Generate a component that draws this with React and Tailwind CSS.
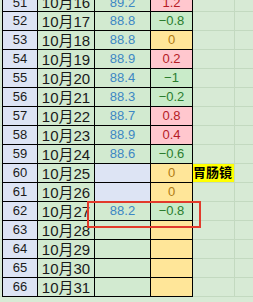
import React from "react";

const rows = [
  { n: 51, d: "10月16", v: "89.2", diff: "1.2", t: "r" },
  { n: 52, d: "10月17", v: "88.8", diff: "−0.8", t: "g" },
  { n: 53, d: "10月18", v: "88.8", diff: "0", t: "y" },
  { n: 54, d: "10月19", v: "88.9", diff: "0.2", t: "r" },
  { n: 55, d: "10月20", v: "88.4", diff: "−1", t: "g" },
  { n: 56, d: "10月21", v: "88.3", diff: "−0.2", t: "g" },
  { n: 57, d: "10月22", v: "88.7", diff: "0.8", t: "r" },
  { n: 58, d: "10月23", v: "88.9", diff: "0.4", t: "r" },
  { n: 59, d: "10月24", v: "88.6", diff: "−0.6", t: "g" },
  { n: 60, d: "10月25", v: "", diff: "0", t: "y", lav: true, note: "胃肠镜" },
  { n: 61, d: "10月26", v: "", diff: "0", t: "y", lav: true },
  { n: 62, d: "10月27", v: "88.2", diff: "−0.8", t: "g" },
  { n: 63, d: "10月28", v: "", diff: "", t: "y" },
  { n: 64, d: "10月29", v: "", diff: "", t: "y" },
  { n: 65, d: "10月30", v: "", diff: "", t: "y" },
  { n: 66, d: "10月31", v: "", diff: "", t: "y" },
];

const diffCls = {
  r: "bg-[#ffc7ce] text-[#b51c26]",
  g: "bg-[#c9ebc9] text-[#2b7d2e]",
  y: "bg-[#ffe699] text-[#b07a12]",
};

export default function App() {
  return (
    <div
      className="relative w-[253px] h-[302px] overflow-hidden bg-[#d7ead5]"
      style={{ fontFamily: '"Liberation Sans", "Noto Sans CJK SC", sans-serif' }}
    >
      <div className="-mt-[7px] flex flex-col">
        {rows.map((r, i) => (
          <div key={r.n} className="flex h-[19px]">
            <div className="w-[2px] shrink-0 border-b border-[#cfe2cc]" />
            <div
              className={`flex w-[36px] shrink-0 items-center justify-center border-x border-b border-black bg-[#dde4f4] text-[13px] text-[#1a1a1a] ${i === 0 ? "border-t" : ""}`}
            >
              {r.n}
            </div>
            <div
              className={`flex w-[57px] shrink-0 items-center justify-center border-r border-b border-black bg-[#d2ead0] text-[15px] leading-none text-[#1a1a1a] ${i === 0 ? "border-t" : ""}`}
            >
              {r.d}
            </div>
            <div
              className={`flex w-[56px] shrink-0 items-center justify-center border-r border-b border-black text-[13px] text-[#3d87c4] ${r.lav ? "bg-[#dde4f4]" : "bg-[#d2ead0]"} ${i === 0 ? "border-t" : ""}`}
            >
              {r.v}
            </div>
            <div
              className={`flex w-[42px] shrink-0 items-center justify-center border-r border-b border-black text-[13px] ${diffCls[r.t]} ${i === 0 ? "border-t" : ""}`}
            >
              {r.diff}
            </div>
            <div className="flex w-[42px] shrink-0 items-center border-r border-b border-[#c3d9c0]">
              {r.note && (
                <span className="flex h-[18px] w-[41px] items-center bg-[#ffff00] text-[13px] font-semibold text-black">
                  {r.note}
                </span>
              )}
            </div>
            <div className="flex-1 border-b border-[#c3d9c0]" />
          </div>
        ))}
      </div>
      <div className="absolute left-[87px] top-[201px] h-[27px] w-[114px] border-2 border-[#e23a2c]" />
    </div>
  );
}
